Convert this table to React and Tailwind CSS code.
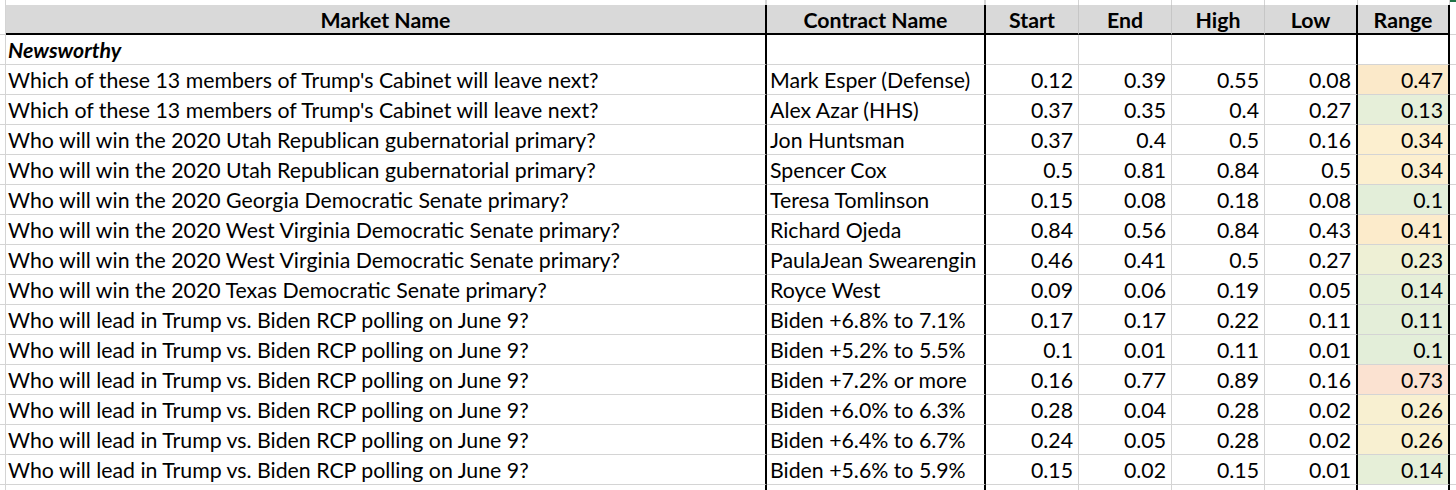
const rows = [
  ['Which of these 13 members of Trump\'s Cabinet will leave next?', 'Mark Esper (Defense)', '0.12', '0.39', '0.55', '0.08', '0.47', 'bg-[#fbe9c9]'],
  ['Which of these 13 members of Trump\'s Cabinet will leave next?', 'Alex Azar (HHS)', '0.37', '0.35', '0.4', '0.27', '0.13', 'bg-[#e6efd9]'],
  ['Who will win the 2020 Utah Republican gubernatorial primary?', 'Jon Huntsman', '0.37', '0.4', '0.5', '0.16', '0.34', 'bg-[#fcefcf]'],
  ['Who will win the 2020 Utah Republican gubernatorial primary?', 'Spencer Cox', '0.5', '0.81', '0.84', '0.5', '0.34', 'bg-[#fcefcf]'],
  ['Who will win the 2020 Georgia Democratic Senate primary?', 'Teresa Tomlinson', '0.15', '0.08', '0.18', '0.08', '0.1', 'bg-[#e3eed9]'],
  ['Who will win the 2020 West Virginia Democratic Senate primary?', 'Richard Ojeda', '0.84', '0.56', '0.84', '0.43', '0.41', 'bg-[#fcebcb]'],
  ['Who will win the 2020 West Virginia Democratic Senate primary?', 'PaulaJean Swearengin', '0.46', '0.41', '0.5', '0.27', '0.23', 'bg-[#eef0d5]'],
  ['Who will win the 2020 Texas Democratic Senate primary?', 'Royce West', '0.09', '0.06', '0.19', '0.05', '0.14', 'bg-[#e6efd8]'],
  ['Who will lead in Trump vs. Biden RCP polling on June 9?', 'Biden +6.8% to 7.1%', '0.17', '0.17', '0.22', '0.11', '0.11', 'bg-[#e4eed9]'],
  ['Who will lead in Trump vs. Biden RCP polling on June 9?', 'Biden +5.2% to 5.5%', '0.1', '0.01', '0.11', '0.01', '0.1', 'bg-[#e3eed9]'],
  ['Who will lead in Trump vs. Biden RCP polling on June 9?', 'Biden +7.2% or more', '0.16', '0.77', '0.89', '0.16', '0.73', 'bg-[#fbe2d1]'],
  ['Who will lead in Trump vs. Biden RCP polling on June 9?', 'Biden +6.0% to 6.3%', '0.28', '0.04', '0.28', '0.02', '0.26', 'bg-[#f8f0d1]'],
  ['Who will lead in Trump vs. Biden RCP polling on June 9?', 'Biden +6.4% to 6.7%', '0.24', '0.05', '0.28', '0.02', '0.26', 'bg-[#f8f0d1]'],
  ['Who will lead in Trump vs. Biden RCP polling on June 9?', 'Biden +5.6% to 5.9%', '0.15', '0.02', '0.15', '0.01', '0.14', 'bg-[#e6efd8]'],
]

const grid = 'grid grid-cols-[6px_761px_219px_93px_93px_93px_93px_92px_1fr]'
const gray = 'border-r border-b border-[#d4d4d4]'
const black = 'border-r-2 border-r-black border-b border-b-[#d4d4d4]'

function Row({ cells, rangeBg = '' }) {
  const [market, contract, ...nums] = cells
  return (
    <div className={`${grid} h-[30px]`}>
      <div className={gray} />
      <div className={`${black} px-[2px] pt-[3px] flex items-center whitespace-nowrap overflow-hidden`}>{market}</div>
      <div className={`${black} px-[3px] pt-[3px] flex items-center whitespace-nowrap overflow-hidden`}>{contract}</div>
      {nums.slice(0, 3).map((n, i) => (
        <div key={i} className={`${gray} pr-[5px] pt-[3px] flex items-center justify-end`}>{n}</div>
      ))}
      <div className={`${black} pr-[5px] pt-[3px] flex items-center justify-end`}>{nums[3]}</div>
      <div className={`${black} ${rangeBg} pr-[5px] pt-[3px] flex items-center justify-end`}>{nums[4]}</div>
      <div className="border-b border-[#d4d4d4]" />
    </div>
  )
}

export default function App() {
  const hdr = 'bg-[#d9d9d9] border-b-2 border-b-black pt-[4px] flex items-center justify-center font-bold'
  return (
    <div className="w-[1456px] h-[490px] overflow-hidden bg-white text-black text-[21.3px] leading-none font-['Lato',sans-serif]">
      {/* strip above the header */}
      <div className={`${grid} h-[5px]`}>
        <div className="border-r border-[#d4d4d4]" />
        <div className="border-r-2 border-r-[#d4d4d4]" />
        <div className="border-r-2 border-r-[#d4d4d4]" />
        <div className="border-r border-[#d4d4d4]" />
        <div className="border-r border-[#d4d4d4]" />
        <div className="border-r border-[#d4d4d4]" />
        <div className="border-r border-[#d4d4d4]" />
        <div className="border-r border-[#d4d4d4]" />
        <div className="border-t-2 border-t-[#217346]" />
      </div>

      {/* header */}
      <div className={`${grid} h-[30px]`}>
        <div className="border-r border-b border-[#d4d4d4]" />
        <div className={`${hdr} border-r-2 border-r-black`}>Market Name</div>
        <div className={`${hdr} border-r-2 border-r-black`}>Contract Name</div>
        <div className={`${hdr} border-r border-r-[#c6c6c6]`}>Start</div>
        <div className={`${hdr} border-r border-r-[#c6c6c6]`}>End</div>
        <div className={`${hdr} border-r border-r-[#c6c6c6]`}>High</div>
        <div className={`${hdr} border-r-2 border-r-black`}>Low</div>
        <div className={`${hdr} border-r-2 border-r-black`}>Range</div>
        <div className="border-b border-[#d4d4d4]" />
      </div>

      <Row cells={[<span key="n" className="font-bold italic">Newsworthy</span>, '', '', '', '', '', '']} />
      {rows.map((r, i) => (
        <Row key={i} cells={r.slice(0, 7)} rangeBg={r[7]} />
      ))}
      <Row cells={['', '', '', '', '', '', '']} />
    </div>
  )
}
